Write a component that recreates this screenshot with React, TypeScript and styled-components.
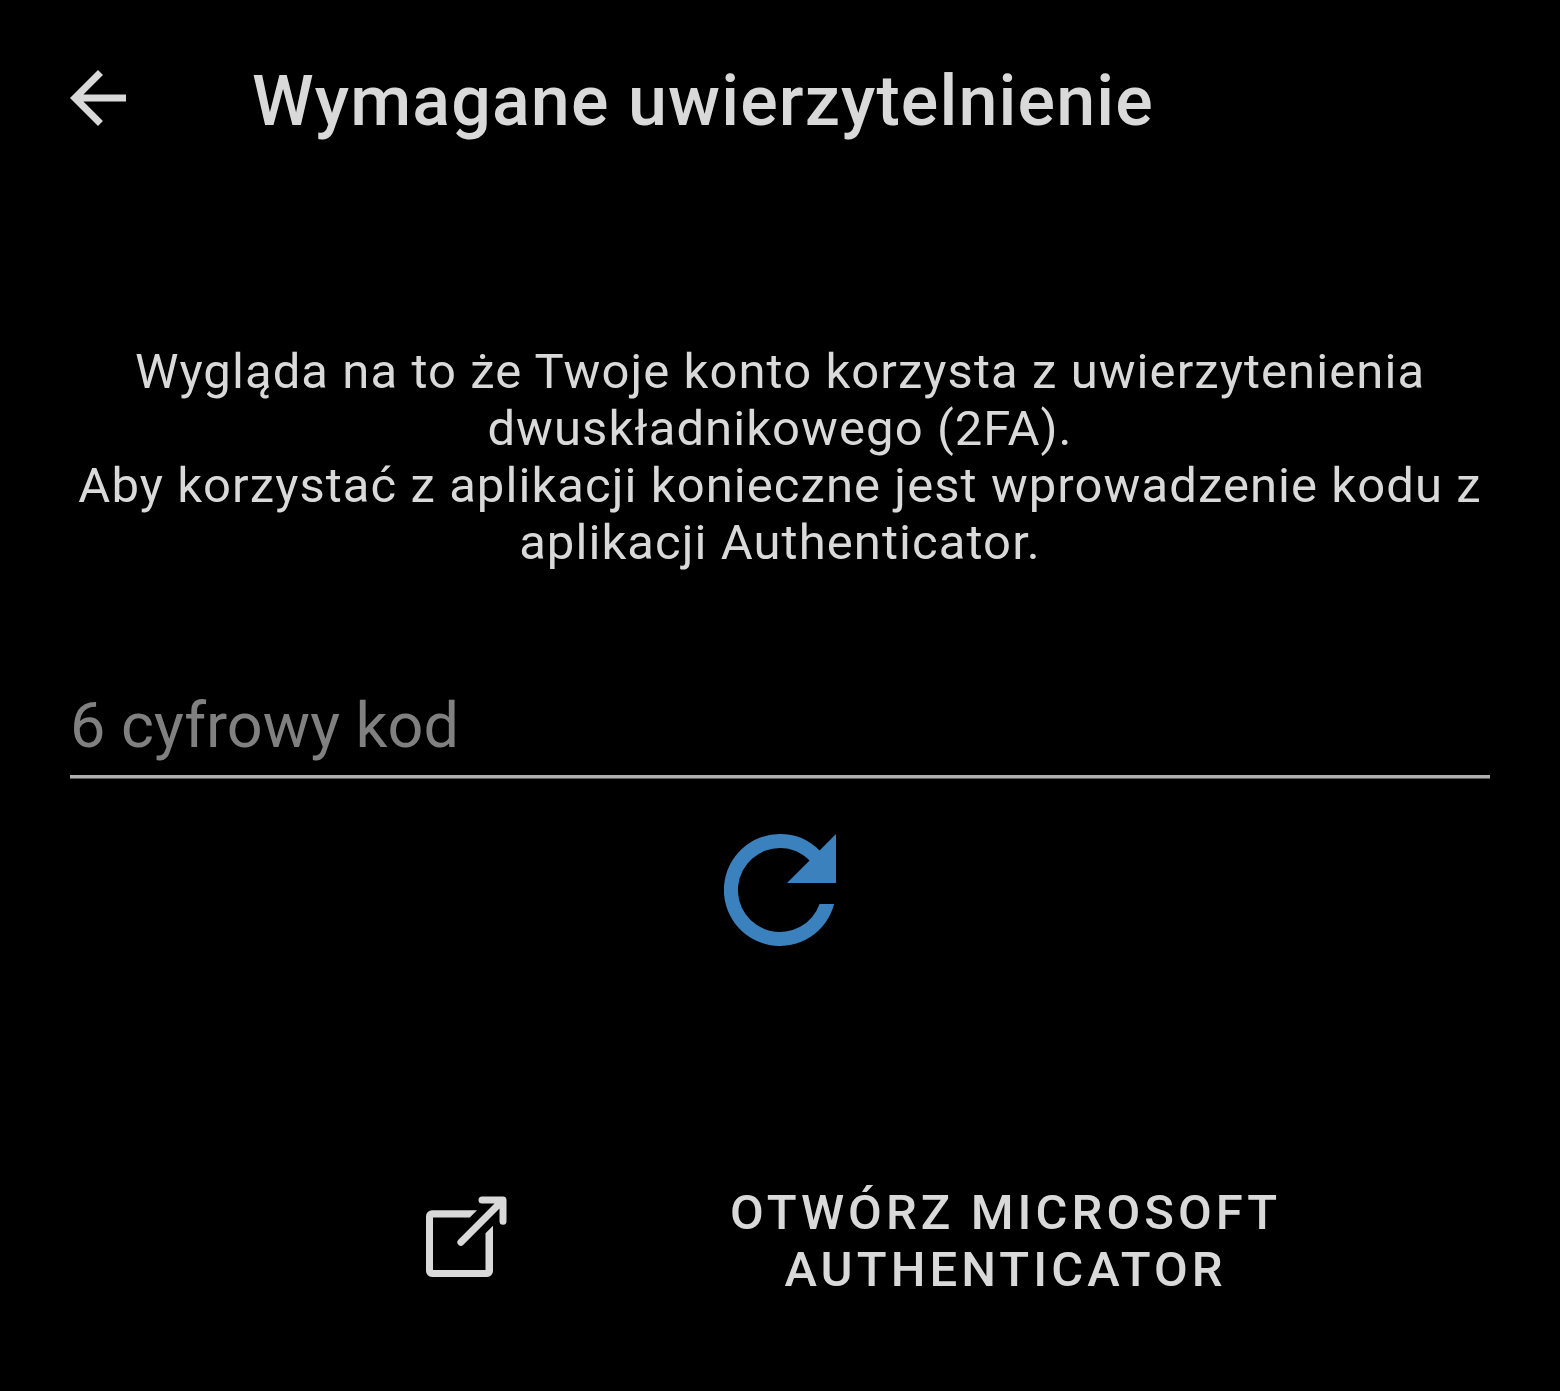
import React from "react";
import styled, { createGlobalStyle } from "styled-components";

const GlobalStyle = createGlobalStyle`
  body { margin: 0; background: #000; }
  * { box-sizing: border-box; }
`;

const Screen = styled.main`
  display: flex;
  flex-direction: column;
  width: 1560px;
  height: 1391px;
  padding: 0 70px;
  overflow: hidden;
  background: #000;
  color: #d9d9d9;
  font-family: Roboto, sans-serif;
`;

const Toolbar = styled.header`
  display: flex;
  align-items: center;
  gap: 126px;
  height: 196px;
`;

const IconButton = styled.button`
  display: flex;
  padding: 0;
  border: 0;
  background: none;
  color: inherit;
`;

const Title = styled.h1`
  margin: 6px 0 0;
  font-size: 70px;
  line-height: 82px;
  font-weight: 500;
  letter-spacing: 1.13px;
  white-space: nowrap;
`;

const Message = styled.p`
  margin: 147px 0 0;
  font-size: 49px;
  line-height: 57px;
  letter-spacing: 1.07px;
  text-align: center;
  white-space: nowrap;
`;

const CodeInput = styled.input`
  display: block;
  width: 100%;
  height: 108px;
  margin-top: 99px;
  padding: 5px 0 0;
  border: 0;
  border-bottom: 3px solid #b1b1b1;
  border-radius: 0;
  box-shadow: 0 1px 0 #5c5c5c;
  outline: 0;
  background: transparent;
  color: #d9d9d9;
  font: 400 63px Roboto, sans-serif;
  &::placeholder { color: #808080; opacity: 1; }
`;

const RefreshButton = styled(IconButton)`
  align-self: center;
  margin-top: 56px;
  color: #3b81bd;
`;

const OpenButton = styled.button`
  display: flex;
  align-items: flex-start;
  gap: 222px;
  margin: 238px 0 0 356px;
  padding: 0;
  border: 0;
  background: none;
  color: inherit;
  font: 500 49px/57px Roboto, sans-serif;
  letter-spacing: 4.05px;
  text-align: center;
  white-space: nowrap;
`;

const OpenIcon = styled.svg`
  flex: none;
  margin-top: 12px;
`;

export default function App() {
  return (
    <>
      <GlobalStyle />
      <Screen>
        <Toolbar>
          <IconButton aria-label="Wstecz">
            <svg width="56" height="56" viewBox="4 4 16 16" fill="currentColor">
              <path d="M20 11H7.83l5.59-5.59L12 4l-8 8 8 8 1.41-1.41L7.83 13H20v-2z" />
            </svg>
          </IconButton>
          <Title>Wymagane uwierzytelnienie</Title>
        </Toolbar>
        <Message>
          Wygląda na to że Twoje konto korzysta z uwierzytenienia<br />
          dwuskładnikowego (2FA).<br />
          Aby korzystać z aplikacji konieczne jest wprowadzenie kodu z<br />
          aplikacji Authenticator.
        </Message>
        <CodeInput placeholder="6 cyfrowy kod" />
        <RefreshButton aria-label="Odśwież">
          <svg width="112" height="112" viewBox="4 4 16 16" fill="currentColor">
            <path d="M17.65 6.35A7.958 7.958 0 0 0 12 4a8 8 0 1 0 7.73 10h-2.08A6 6 0 1 1 12 6c1.66 0 3.14.69 4.22 1.78L13 11h7V4l-2.35 2.35z" />
          </svg>
        </RefreshButton>
        <OpenButton>
          <OpenIcon width="82" height="82" viewBox="0 0 82 82">
            <path fill="currentColor" d="M51 14.300H6A6 6 0 0 0 0 20.300V75A6 6 0 0 0 6 81H61A6 6 0 0 0 67 75V29.700L59.500 37.200V74H7V21.500H43.800Z" />
            <path fill="none" stroke="currentColor" strokeWidth="7" strokeLinecap="round" strokeLinejoin="round" d="M56 4H77V25.200M76.500 4.500L34.900 46.200" />
          </OpenIcon>
          <span>OTWÓRZ MICROSOFT<br />AUTHENTICATOR</span>
        </OpenButton>
      </Screen>
    </>
  );
}
